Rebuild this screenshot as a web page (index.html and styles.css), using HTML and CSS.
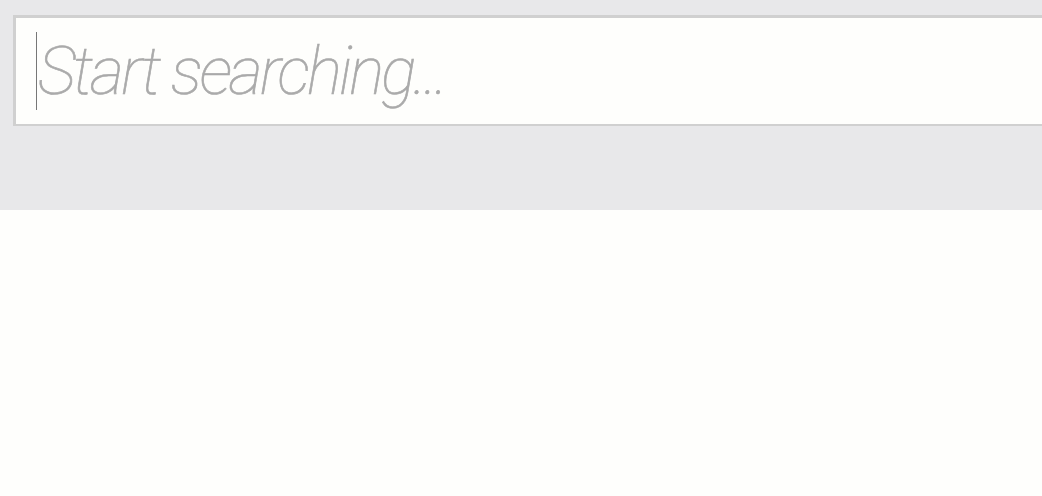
FILE: index.html
```html
<!DOCTYPE html>
<html lang="en">
<head>
  <meta charset="UTF-8">
  <meta name="viewport" content="width=device-width, initial-scale=1.0">
  <title>Search</title>
  <link rel="stylesheet" href="styles.css">
</head>
<body>

  <header class="search-bar">
    <div class="search-field">
      <span class="caret"></span>
      <input type="text" class="search-input" placeholder="Start searching...">
    </div>
  </header>

  <main class="results"></main>

</body>
</html>
```

FILE: styles.css
```css
/* Search page */
body {
  margin: 0;
  background-color: #fefefc;
  font-family: Roboto, "Liberation Sans", sans-serif;
  overflow: hidden;
}

.search-bar {
  background-color: #e8e8ea;
  height: 210px;
  padding: 15px 0 0 13px;
  box-sizing: border-box;
  overflow: hidden;
}

.search-field {
  position: relative;
  width: 1100px;
  height: 111px;
  box-sizing: border-box;
  border: 3px solid #d0d0d0;
  border-bottom-width: 2px;
  background-color: #fefefc;
  display: flex;
  align-items: center;
}

.caret {
  position: absolute;
  left: 20px;
  top: 14px;
  width: 1px;
  height: 78px;
  background-color: #777;
}

.search-input {
  flex: 1;
  border: none;
  outline: none;
  background: transparent;
  padding: 0 0 0 22px;
  font-family: Roboto, "Liberation Sans", sans-serif;
  font-size: 66px;
  font-weight: 100;
  font-style: italic;
  letter-spacing: -3px;
  color: #aaa;
}

.search-input::placeholder {
  color: #aaa;
  opacity: 1;
  -webkit-text-stroke: 0.6px #aaa;
}

.results {
  height: 286px;
}
```
